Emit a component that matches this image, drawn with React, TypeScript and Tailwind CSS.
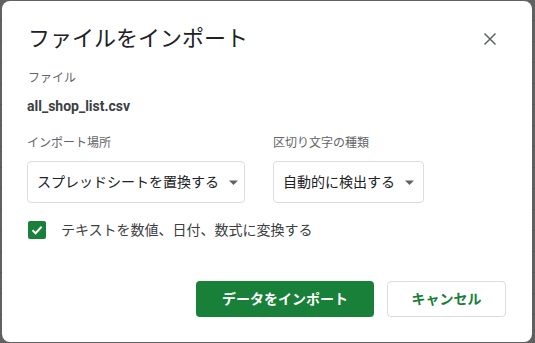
import React from "react";

const jp = { fontFamily: 'Roboto, "Noto Sans CJK JP", sans-serif' };

function Caret() {
  return (
    <svg width="9" height="5" viewBox="0 0 9 5" className="shrink-0">
      <path d="M0 0.5 L9 0.5 L4.5 5 Z" fill="#5f6368" />
    </svg>
  );
}

export default function App() {
  return (
    <div
      className="w-[535px] h-[343px] overflow-hidden pl-[2px] pt-[1px] bg-[#616161] bg-[repeating-linear-gradient(180deg,#616161_0px,#616161_20px,#585858_20px,#585858_21px)]"
      style={jp}
    >
      <div className="w-[530px] h-[341px] bg-white rounded-[8px] flex flex-col pl-[26px] pr-[26px]">
        <div className="flex items-center justify-between pt-[24px] h-[52px]">
          <div className="text-[22px] leading-[28px] text-[#202124]">ファイルをインポート</div>
          <svg width="24" height="24" viewBox="0 0 24 24" className="mr-[4px]">
            <path d="M6.5 6.5 L17.5 17.5 M17.5 6.5 L6.5 17.5" stroke="#5f6368" strokeWidth="1.5" />
          </svg>
        </div>
        <div className="mt-[17px] text-[12px] leading-[16px] text-[#5f6368]">ファイル</div>
        <div className="mt-[10px] text-[14px] leading-[20px] font-bold text-[#3c4043] -ml-[1px]">all_shop_list.csv</div>
        <div className="mt-[19px] flex gap-[28px] -ml-[1px]">
          <div className="flex flex-col">
            <div className="text-[12px] leading-[16px] text-[#5f6368]">インポート場所</div>
            <div className="mt-[10px] w-[218px] h-[42px] border border-[#dadce0] rounded-[4px] flex items-center pl-[9px] gap-[10px] text-[14px] text-[#202124]">
              <span>スプレッドシートを置換する</span>
              <Caret />
            </div>
          </div>
          <div className="flex flex-col">
            <div className="text-[12px] leading-[16px] text-[#5f6368]">区切り文字の種類</div>
            <div className="mt-[10px] w-[151px] h-[42px] border border-[#dadce0] rounded-[4px] flex items-center pl-[9px] gap-[10px] text-[14px] text-[#202124]">
              <span>自動的に検出する</span>
              <Caret />
            </div>
          </div>
        </div>
        <div className="mt-[17px] flex items-center gap-[15px]">
          <div className="w-[18px] h-[18px] rounded-[2px] bg-[#188038] flex items-center justify-center">
            <svg width="14" height="14" viewBox="0 0 14 14">
              <path d="M2.5 7.2 L5.6 10.2 L11.6 3.8" stroke="white" strokeWidth="2" fill="none" />
            </svg>
          </div>
          <span className="text-[14px] leading-[20px] text-[#3c4043]">テキストを数値、日付、数式に変換する</span>
        </div>
        <div className="mt-[41px] flex justify-end gap-[13px]">
          <div className="w-[178px] h-[36px] rounded-[4px] bg-[#188038] flex items-center justify-center text-white text-[14px] font-bold">
            データをインポート
          </div>
          <div className="w-[119px] h-[36px] rounded-[4px] border border-[#dadce0] flex items-center justify-center text-[#188038] text-[14px] font-bold">
            キャンセル
          </div>
        </div>
      </div>
    </div>
  );
}
